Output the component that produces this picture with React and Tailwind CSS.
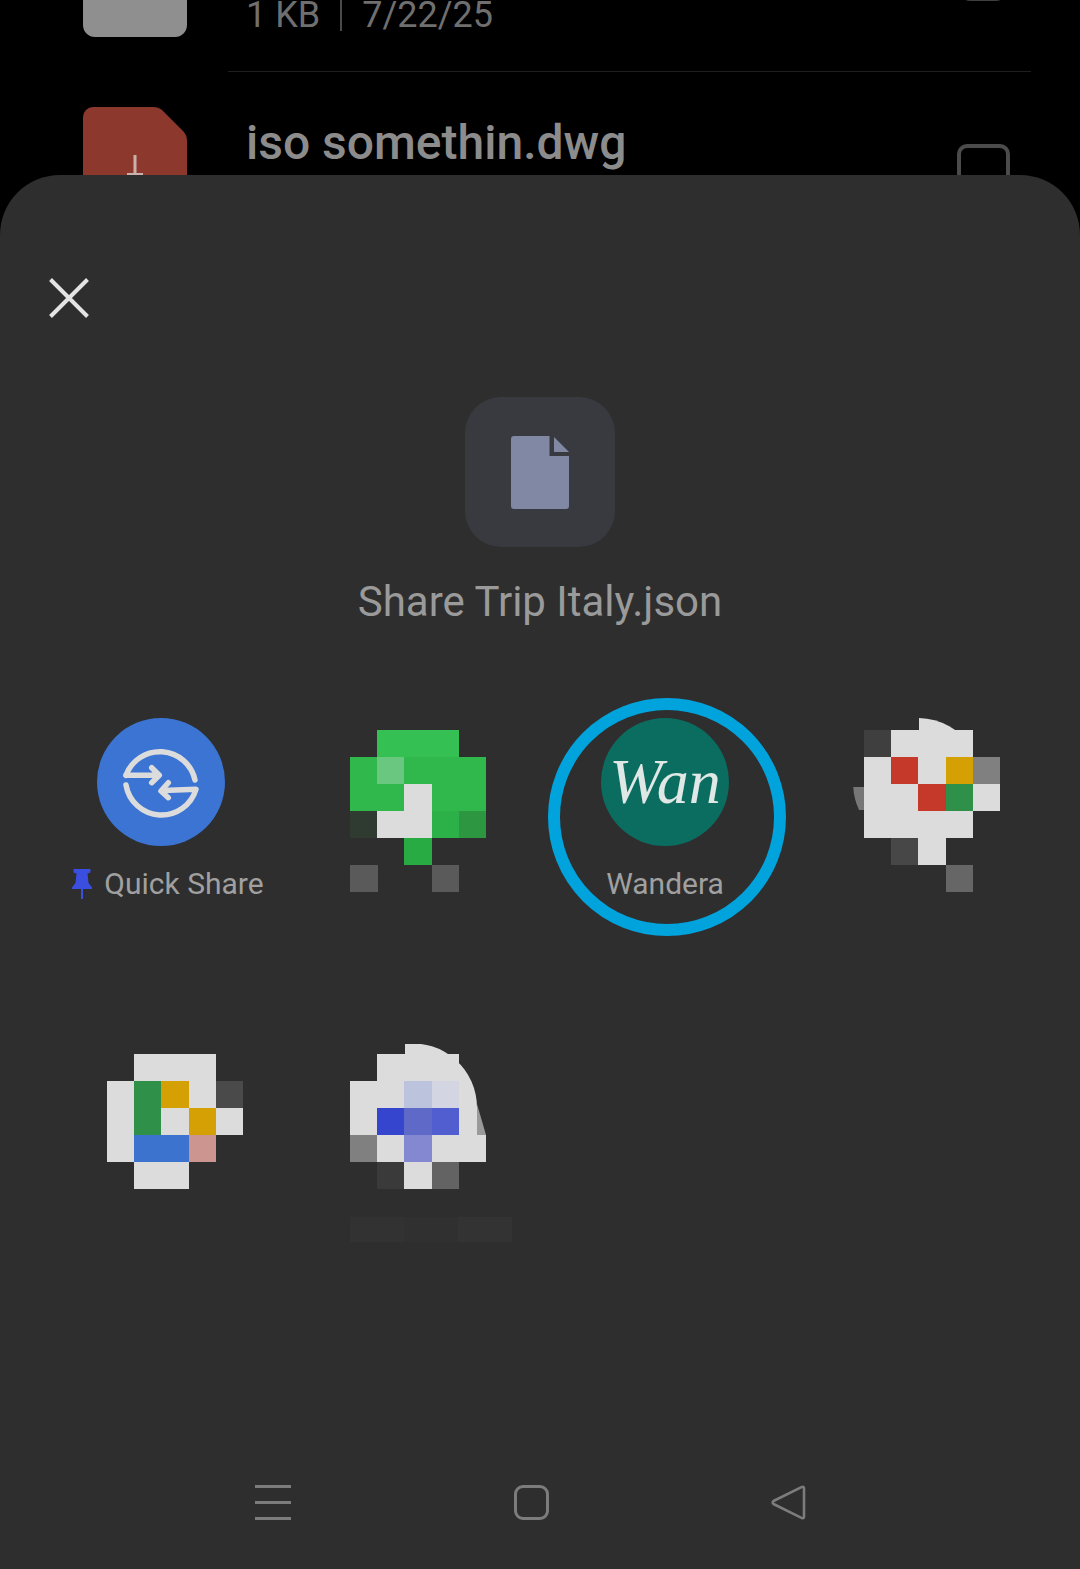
import React from 'react';

const W = '#dcdcdc';
const GRN = '#2f9149';
const AMB = '#d5a003';
const G = '#30b84c';

// pixelated (censored) app icons: one list of cell colours per row
const greenCells = [
    [null, '#34c052', '#34c052', '#34c052', null],
    [G, '#69c77f', G, G, G],
    [G, G, W, G, G],
    ['#2f3a30', W, W, '#2cb048', '#2d9640'],
    [null, null, '#27ab42', null, null],
    ['#5a5a5a', null, null, '#5a5a5a', null],
];
const redCells = [
    ['#3f3f3f', W, W, W, null],
    [W, '#c5392b', W, AMB, '#808080'],
    [W, W, '#c5392b', GRN, W],
    [W, W, W, W, null],
    [null, '#474747', W, null, null],
    [null, null, null, '#666666', null],
];
const docsCells = [
    [null, W, W, W, null],
    [W, GRN, AMB, W, '#4a4a4a'],
    [W, GRN, W, AMB, W],
    [W, '#3b73cf', '#3b73cf', '#cc9590', null],
    [null, W, W, null, null],
];
const blueCells = [
    [null, W, W, W, null],
    [W, W, '#bcc3dd', '#d3d5e2', null],
    [W, '#3545cd', '#5f69c8', '#515ed0', null],
    ['#808080', W, '#8488d0', W, W],
    [null, '#3a3a3a', W, '#636363', null],
];

const Mosaic = ({ cells, x, y, children }) => (
    <svg width="252" height="200" viewBox="0 0 252 200" className="block">
        {children}
        {cells.map((row, r) =>
            row.map((color, c) =>
                color ? <rect key={`${r}-${c}`} x={x + c * 27.2} y={y + r * 27} width="27.6" height="27.4" fill={color} shapeRendering="crispEdges" /> : null
            )
        )}
    </svg>
);

const QuickShareIcon = () => (
    <svg width="128" height="128" viewBox="0 0 128 128" className="block">
        <circle cx="64" cy="64" r="64" fill="#3b74d2" />
        <g fill="none" stroke="#dcdcdc" strokeWidth="5.5" strokeLinecap="round" strokeLinejoin="round">
            <path d="M29 57.3 A36 36 0 0 1 98 62" />
            <path d="M29 57.3 H61 M54.7 49.7 L62.3 57.3 L54.7 64.7" />
            <path d="M29 67 A36 36 0 0 0 99 71.3 L66 72.5" />
            <path d="M71.3 64.7 L64 73 L71.3 79.7" />
        </g>
    </svg>
);

const Pin = () => (
    <svg width="20" height="30" viewBox="0 0 20 30" className="block">
        <path d="M1.5 0 H18.5 V3.5 L15.5 4.5 L16.5 14 L20 18.5 V20 H11 V30 H9 V20 H0 V18.5 L3.5 14 L4.5 4.5 L1.5 3.5 Z" fill="#3a4fe0" />
    </svg>
);

const Label = ({ children }) => (
    <span className="text-[30px] leading-[36px] text-[#a0a0a0]">{children}</span>
);

const App = () => {
    return (
        <div className="relative h-[1569px] w-[1080px] overflow-hidden bg-black font-['Roboto',sans-serif]">
            {/* Lista de archivos detras de la hoja */}
            <div className="h-[175px] overflow-hidden">
                <div className="-mt-[67px] flex pl-[83px]">
                    <div className="h-[104px] w-[104px] rounded-[12px] bg-[#8f8f8f]" />
                    <div className="ml-[59px] mt-[60px] flex items-center text-[36px] leading-[40px] text-[#6f6f6f]">
                        <span>1 KB</span>
                        <span className="mx-[20px] h-[32px] w-[2px] bg-[#4a4a4a]" />
                        <span>7/22/25</span>
                    </div>
                    <div className="ml-auto mr-[74px] mt-[15px] h-[53px] w-[46px] rounded-[10px] border-[3px] border-[#3f3f3f]" />
                </div>
                <div className="ml-[228px] mr-[49px] mt-[34px] h-[1px] bg-[#1f1f1f]" />
                <div className="mt-[35px] flex pl-[83px]">
                    <svg width="104" height="104" viewBox="0 0 104 104" className="block">
                        <path d="M10 0 H70 Q76 0 80 4 L100 24 Q104 28 104 34 V104 H0 V10 A10 10 0 0 1 10 0 Z" fill="#8d382c" />
                        <path d="M50.5 48 H53.5 V66 H60 V69 H44 V66 H50.5 Z" fill="#c9b0ab" />
                    </svg>
                    <div className="ml-[59px] mt-[9px] text-[48px] font-medium leading-[54px] text-[#8c8c8c]">iso somethin.dwg</div>
                    <div className="ml-auto mr-[70px] mt-[37px] h-[53px] w-[53px] rounded-[10px] border-[4px] border-[#4b4b4b]" />
                </div>
            </div>

            {/* Hoja de compartir */}
            <div className="flex h-[1394px] flex-col rounded-t-[60px] bg-[#2e2e2e]">
                <svg width="40" height="40" viewBox="0 0 40 40" className="ml-[49px] mt-[103px] block">
                    <path d="M1.5 1.5 L38.5 38.5 M38.5 1.5 L1.5 38.5" stroke="#e4e4e4" strokeWidth="4" fill="none" />
                </svg>

                <div className="mt-[79px] flex h-[150px] w-[150px] items-center justify-center self-center rounded-[36px] bg-[#383a40]">
                    <svg width="58" height="73" viewBox="0 0 58 73" className="block">
                        <path d="M3 0 H38.5 V20 H58 V70 A3 3 0 0 1 55 73 H3 A3 3 0 0 1 0 70 V3 A3 3 0 0 1 3 0 Z" fill="#8188a4" />
                        <path d="M43 1 L58 16 H43 Z" fill="#8188a4" />
                    </svg>
                </div>

                <div className="mt-[29px] text-center text-[42px] leading-[52px] text-[#9a9a9a]">Share Trip Italy.json</div>

                <div className="ml-[35px] mt-[90px] grid w-[1008px] grid-cols-[repeat(4,252px)] grid-rows-[repeat(2,326px)]">
                    <div className="flex flex-col items-center">
                        <QuickShareIcon />
                        <div className="ml-[14px] mt-[20px] flex items-center gap-[12px]">
                            <Pin />
                            <Label>Quick Share</Label>
                        </div>
                    </div>

                    <Mosaic cells={greenCells} x={63} y={12} />

                    <div className="relative flex flex-col items-center">
                        <div className="flex h-[128px] w-[128px] items-center justify-center rounded-full bg-[#0b6c60]">
                            <span className="font-['Liberation_Serif',serif] text-[64px] italic leading-none text-[#dfe8e5]">Wan</span>
                        </div>
                        <div className="mt-[20px]"><Label>Wandera</Label></div>
                        <div className="absolute left-[9px] top-[-20px] h-[238px] w-[238px] rounded-full border-[12px] border-[#01a3dd]" />
                    </div>

                    <Mosaic cells={redCells} x={73} y={12}>
                        <path d="M128 0 A64 64 0 0 1 181 30 V40 H128 Z" fill={W} />
                        <path d="M62.2 69 A64 64 0 0 0 68 92 H74 V69 Z" fill="#777777" />
                    </Mosaic>

                    <Mosaic cells={docsCells} x={72} y={10} />

                    <Mosaic cells={blueCells} x={63} y={10}>
                        <path d="M118 0 A64 64 0 0 1 190 64 V92 H118 Z" fill={W} />
                        <path d="M190 60 L199 91 H190 Z" fill="#9a9a9a" />
                        <rect x="63" y="173" width="54" height="25" fill="#323232" />
                        <rect x="117" y="173" width="54" height="25" fill="#303030" />
                        <rect x="171" y="173" width="54" height="25" fill="#333333" />
                    </Mosaic>
                </div>

                <div className="mt-auto flex items-center justify-between pb-[49px] pl-[255px] pr-[274px]">
                    <div className="flex h-[35px] w-[36px] flex-col justify-between">
                        <div className="h-[3px] bg-[#7c7c7c]" />
                        <div className="h-[3px] bg-[#7c7c7c]" />
                        <div className="h-[3px] bg-[#7c7c7c]" />
                    </div>
                    <div className="h-[35px] w-[35px] rounded-[9px] border-[3px] border-[#7c7c7c]" />
                    <svg width="35" height="35" viewBox="0 0 35 35" className="block">
                        <path d="M33 3.2 V31.8 Q33 34 30.5 32.8 L2.5 19 Q0.8 17.5 2.5 16 L30.5 2.2 Q33 1 33 3.2 Z" fill="none" stroke="#7c7c7c" strokeWidth="2.6" strokeLinejoin="round" />
                    </svg>
                </div>
            </div>
        </div>
    );
};

export default App;
